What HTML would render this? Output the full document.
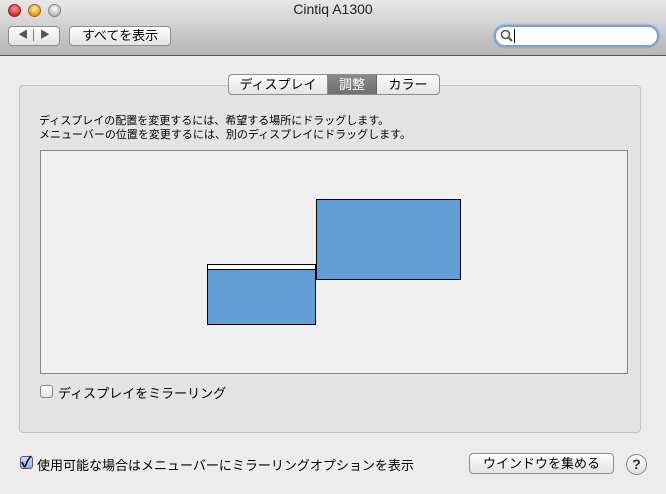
<!DOCTYPE html>
<html><head><meta charset="utf-8"><style>
*{margin:0;padding:0;box-sizing:border-box}
body{width:666px;height:494px;overflow:hidden;background:#ececec;font-family:"Liberation Sans","Noto Sans CJK JP",sans-serif;font-size:13px;color:#000;position:relative}
.a{position:absolute}
#tb{left:0;top:0;width:666px;height:56px;background:linear-gradient(#e8e8e8,#c9c9c9 60%,#b5b5b5);border-bottom:1px solid #555}
.tl{width:13px;height:13px;border-radius:50%;top:4px}
.btn{background:linear-gradient(#fdfdfd,#e3e3e3);border:1px solid #8e8e8e;border-radius:4px;text-align:center}
</style></head><body>
<div id="tb" class="a"></div>
<div class="a tl" style="left:8px;background:radial-gradient(circle at 50% 35%,#f9a,#d2282c 70%);border:1px solid #9a2a2a"></div>
<div class="a tl" style="left:28px;background:radial-gradient(circle at 50% 35%,#fe9,#e09a12 70%);border:1px solid #a07020"></div>
<div class="a tl" style="left:48px;background:radial-gradient(circle at 50% 35%,#fff,#bbb 70%);border:1px solid #888"></div>
<div class="a" style="left:0;width:666px;top:1px;text-align:center;font-size:14px;color:#222">Cintiq A1300</div>
<div class="a btn" style="left:8px;top:26px;width:52px;height:20px;font-size:10px;color:#555;line-height:18px">◀ │ ▶</div>
<div class="a btn" style="left:69px;top:26px;width:102px;height:20px;line-height:18px">すべてを表示</div>
<div class="a" style="left:494px;top:25px;width:165px;height:22px;border-radius:11px;border:2px solid #76a3d8;background:#fff;box-shadow:0 0 2px #5b8fd0"></div>
<svg class="a" style="left:500px;top:29px" width="14" height="14"><circle cx="5.5" cy="5.5" r="4" stroke="#555" stroke-width="1.6" fill="none"/><line x1="8.5" y1="8.5" x2="12" y2="12" stroke="#555" stroke-width="2"/></svg>
<div class="a" style="left:514px;top:29px;width:1px;height:14px;background:#000"></div>

<div class="a" style="left:19px;top:85px;width:622px;height:348px;background:#e3e3e3;border:1px solid #c4c4c4;border-radius:4px"></div>
<div class="a btn" style="left:228px;top:74px;width:212px;height:21px;border-radius:4px;display:flex;line-height:19px">
<div style="width:99px;border-right:1px solid #8e8e8e">ディスプレイ</div>
<div style="width:49px;background:linear-gradient(#8a8a8a,#6f6f6f);color:#fff;border-right:1px solid #666">調整</div>
<div style="flex:1">カラー</div></div>
<div class="a" style="left:39px;top:114px;font-size:11px;line-height:14px">ディスプレイの配置を変更するには、希望する場所にドラッグします。<br>メニューバーの位置を変更するには、別のディスプレイにドラッグします。</div>
<div class="a" style="left:40px;top:150px;width:588px;height:224px;background:#f0f0f0;border:1px solid #8a8a8a"></div>
<div class="a" style="left:207px;top:264px;width:109px;height:61px;background:#629dd4;border:1px solid #000"></div>
<div class="a" style="left:208px;top:265px;width:107px;height:5px;background:#fff;border-bottom:1px solid #000"></div>
<div class="a" style="left:316px;top:199px;width:145px;height:81px;background:#629dd4;border:1px solid #000"></div>
<div class="a" style="left:40px;top:385px;width:13px;height:13px;border:1px solid #888;border-radius:3px;background:linear-gradient(#fff,#e0e0e0)"></div>
<div class="a" style="left:58px;top:383px">ディスプレイをミラーリング</div>
<div class="a" style="left:20px;top:456px;width:13px;height:13px;border:1px solid #557;border-radius:3px;background:linear-gradient(#cfe0f6,#8db4e4)"></div>
<div class="a" style="left:21px;top:451px;font-size:15px;font-weight:bold;color:#111">✓</div>
<div class="a" style="left:37px;top:455px">使用可能な場合はメニューバーにミラーリングオプションを表示</div>
<div class="a btn" style="left:469px;top:453px;width:145px;height:21px;line-height:19px">ウインドウを集める</div>
<div class="a" style="left:626px;top:454px;width:21px;height:21px;border-radius:50%;border:1px solid #888;background:linear-gradient(#fff,#ddd);text-align:center;line-height:19px;font-weight:bold;font-size:14px;color:#333">?</div>
</body></html>
